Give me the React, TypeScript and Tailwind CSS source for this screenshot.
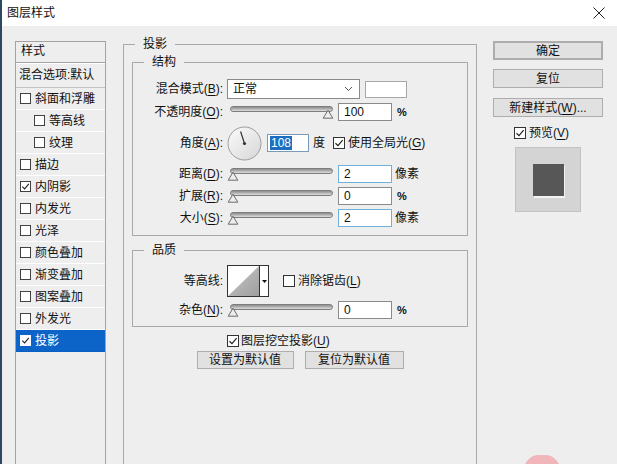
import React from "react";

const font = "font-['Liberation_Sans','Noto_Sans_CJK_SC',sans-serif]";

type CheckProps = { checked?: boolean; size?: number; inverse?: boolean };

const Check: React.FC<CheckProps> = ({ checked, size = 12, inverse }) => (
  <svg width={size} height={size} viewBox="0 0 12 12" className="shrink-0">
    <rect x="0.5" y="0.5" width="11" height="11" fill="#ffffff" stroke={inverse ? "#ffffff" : "#333333"} />
    {checked && <path d="M2.5 6.2 L5 8.6 L9.6 3.2" fill="none" stroke="#222222" strokeWidth="1.2" />}
  </svg>
);

const Key: React.FC<{ k: string }> = ({ k }) => <span className="underline underline-offset-2">{k}</span>;

const Slider: React.FC<{ pos: number }> = ({ pos }) => (
  <div className="relative h-[22px] w-[108px] shrink-0">
    <div className="absolute left-[3px] top-[5px] h-[6px] w-[103px] rounded-full border border-[#7e7e7e] bg-gradient-to-b from-[#8c8c8c] to-[#dedede]" />
    <svg className="absolute top-[8px]" style={{ left: pos }} width="12" height="10" viewBox="0 0 12 10">
      <path d="M1.2 9.2 L6 1.2 L10.8 9.2 Z" fill="#ededed" stroke="#6a6a6a" strokeLinejoin="round" />
    </svg>
  </div>
);

const Field: React.FC<{ value: string; focus?: boolean }> = ({ value, focus }) => (
  <div
    className={`ml-[3px] h-[18px] w-[54px] shrink-0 border bg-white pl-[5px] text-[12px] leading-[16px] ${
      focus ? "border-[#6fb0dc]" : "border-[#8a8a8a]"
    }`}
  >
    {value}
  </div>
);

const Row: React.FC<{ label: React.ReactNode; className: string; children: React.ReactNode }> = ({
  label,
  className,
  children,
}) => (
  <div className={`flex items-center ${className}`}>
    <div className="w-[90px] shrink-0 text-right whitespace-nowrap">{label}</div>
    <div className="ml-[4px] flex items-center">{children}</div>
  </div>
);

const Btn: React.FC<{ children: React.ReactNode; className?: string }> = ({ children, className = "" }) => (
  <div
    className={`flex items-center justify-center border border-[#adadad] bg-[#e1e1e1] text-[12px] leading-[16px] ${className}`}
  >
    {children}
  </div>
);

const styles = [
  { name: "斜面和浮雕", indent: false, checked: false },
  { name: "等高线", indent: true, checked: false },
  { name: "纹理", indent: true, checked: false },
  { name: "描边", indent: false, checked: false },
  { name: "内阴影", indent: false, checked: true },
  { name: "内发光", indent: false, checked: false },
  { name: "光泽", indent: false, checked: false },
  { name: "颜色叠加", indent: false, checked: false },
  { name: "渐变叠加", indent: false, checked: false },
  { name: "图案叠加", indent: false, checked: false },
  { name: "外发光", indent: false, checked: false },
  { name: "投影", indent: false, checked: true, active: true },
];

export default function App() {
  return (
    <div
      className={`relative flex h-[464px] w-[617px] flex-col overflow-hidden border-l-2 border-[#2c4862] bg-[#eeeeee] text-[12px] text-[#111111] ${font}`}
    >
      {/* title bar */}
      <div className="flex h-[26px] shrink-0 items-center justify-between bg-white pl-[5px] pr-[12px]">
        <span className="text-[12px] leading-[16px]">图层样式</span>
        <svg width="12" height="12" viewBox="0 0 12 12">
          <path d="M0.5 0.5 L11.5 11.5 M11.5 0.5 L0.5 11.5" stroke="#222222" strokeWidth="1" />
        </svg>
      </div>

      <div className="flex flex-1">
        {/* left style list */}
        <div className="ml-[13px] mt-[15px] flex h-[440px] w-[91px] shrink-0 flex-col border border-[#a3a3a3] bg-[#eeeeee]">
          <div className="h-[21px] shrink-0 border-b border-[#a3a3a3] pl-[5px] leading-[19px]">样式</div>
          <div className="h-[25px] shrink-0 border-b border-[#c4c4c4] border-t border-t-white pl-[3px] leading-[22px] whitespace-nowrap">
            混合选项:默认
          </div>
          {styles.map((s) => (
            <div
              key={s.name}
              className={`flex h-[22px] shrink-0 items-center gap-[4px] border-b ${
                s.active ? "border-[#0a5fc2] bg-[#0c64c8] text-white" : "border-white"
              } ${s.indent ? "pl-[18px]" : "pl-[4px]"}`}
            >
              <Check checked={s.checked} size={11} inverse={s.active} />
              <span className="leading-[16px]">{s.name}</span>
            </div>
          ))}
        </div>

        {/* main group */}
        <div className="ml-[17px] flex flex-col pt-[10px]">
          <fieldset className="h-[440px] w-[354px] border border-[#a9a9a9]">
            <legend className="ml-[11px] px-[8px] leading-[16px]">投影</legend>

            <fieldset className="mx-[8px] mt-[2px] border border-[#a9a9a9] pb-[6px]">
              <legend className="ml-[11px] px-[8px] leading-[16px]">结构</legend>

              <Row className="mt-[9px] h-[20px]" label={<>混合模式(<Key k="B" />):</>}>
                <div className="flex h-[20px] w-[133px] items-center justify-between border border-[#8a8a8a] bg-white pl-[5px] pr-[6px]">
                  <span className="leading-[16px]">正常</span>
                  <svg width="9" height="6" viewBox="0 0 9 6">
                    <path d="M1 1 L4.5 4.5 L8 1" fill="none" stroke="#555555" strokeWidth="1" />
                  </svg>
                </div>
                <div className="ml-[5px] h-[17px] w-[42px] border border-[#a6a6a6] bg-white" />
              </Row>

              <Row className="mt-[2px] h-[22px]" label={<>不透明度(<Key k="O" />):</>}>
                <Slider pos={95} />
                <Field value="100" />
                <span className="ml-[5px] text-[11px] font-bold">%</span>
              </Row>

              <Row className="mt-[2px] h-[36px]" label={<>角度(<Key k="A" />):</>}>
                <svg width="36" height="35" viewBox="0 0 36 35" className="shrink-0">
                  <defs>
                    <linearGradient id="dial" x1="0" y1="0" x2="1" y2="1">
                      <stop offset="0" stopColor="#fbfbfb" />
                      <stop offset="1" stopColor="#d6d6d6" />
                    </linearGradient>
                  </defs>
                  <circle cx="17.5" cy="17.5" r="16.5" fill="url(#dial)" stroke="#9c9c9c" />
                  <path d="M17.5 17.5 L13.6 5.5" stroke="#333333" strokeWidth="1.2" />
                  <circle cx="17.5" cy="17.5" r="1.6" fill="#333333" />
                </svg>
                <div className="ml-[4px] flex h-[18px] w-[42px] items-center border border-[#7a9bb8] bg-white pl-[2px]">
                  <span className="bg-[#1c6fc0] px-[1px] leading-[14px] text-white">108</span>
                </div>
                <span className="ml-[4px] leading-[16px]">度</span>
                <div className="ml-[8px] flex items-center gap-[3px]">
                  <Check checked />
                  <span className="leading-[16px] whitespace-nowrap">
                    使用全局光(<Key k="G" />)
                  </span>
                </div>
              </Row>

              <Row className="mt-[2px] h-[22px]" label={<>距离(<Key k="D" />):</>}>
                <Slider pos={0} />
                <Field value="2" focus />
                <span className="ml-[3px] leading-[16px]">像素</span>
              </Row>
              <Row className="h-[22px]" label={<>扩展(<Key k="R" />):</>}>
                <Slider pos={0} />
                <Field value="0" />
                <span className="ml-[5px] text-[11px] font-bold">%</span>
              </Row>
              <Row className="h-[22px]" label={<>大小(<Key k="S" />):</>}>
                <Slider pos={0} />
                <Field value="2" focus />
                <span className="ml-[3px] leading-[16px]">像素</span>
              </Row>
            </fieldset>

            <fieldset className="mx-[8px] mt-[6px] border border-[#a9a9a9] pb-[5px]">
              <legend className="ml-[11px] px-[8px] leading-[16px]">品质</legend>

              <Row className="mt-[7px] h-[32px]" label="等高线:">
                <div className="flex h-[32px] w-[42px] border border-[#333333] bg-white">
                  <svg width="31" height="30" viewBox="0 0 31 30" className="shrink-0">
                    <defs>
                      <linearGradient id="ct" x1="0" y1="0" x2="1" y2="1">
                        <stop offset="0" stopColor="#c9c9c9" />
                        <stop offset="1" stopColor="#9e9e9e" />
                      </linearGradient>
                    </defs>
                    <path d="M0 30 L31 0 L31 30 Z" fill="url(#ct)" />
                  </svg>
                  <div className="flex flex-1 items-center justify-center border-l border-[#333333]">
                    <svg width="5" height="3" viewBox="0 0 5 3">
                      <path d="M0 0 L5 0 L2.5 3 Z" fill="#111111" />
                    </svg>
                  </div>
                </div>
                <div className="ml-[14px] flex items-center gap-[3px]">
                  <Check />
                  <span className="leading-[16px] whitespace-nowrap">
                    消除锯齿(<Key k="L" />)
                  </span>
                </div>
              </Row>

              <Row className="mt-[2px] h-[22px]" label={<>杂色(<Key k="N" />):</>}>
                <Slider pos={0} />
                <Field value="0" />
                <span className="ml-[5px] text-[11px] font-bold">%</span>
              </Row>
            </fieldset>

            <div className="mt-[6px] flex h-[16px] items-center gap-[2px] pl-[103px]">
              <Check checked />
              <span className="leading-[16px]">
                图层挖空投影(<Key k="U" />)
              </span>
            </div>

            <div className="mt-[2px] flex justify-center gap-[11px]">
              <Btn className="h-[18px] w-[97px]">设置为默认值</Btn>
              <Btn className="h-[18px] w-[99px]">复位为默认值</Btn>
            </div>
          </fieldset>
        </div>

        {/* right column */}
        <div className="ml-[16px] flex w-[110px] flex-col pt-[15px]">
          <Btn className="h-[19px] border-2 border-[#3a77a8]">确定</Btn>
          <Btn className="mt-[9px] h-[19px]">复位</Btn>
          <Btn className="mt-[10px] h-[19px] whitespace-nowrap">
            新建样式(<Key k="W" />)...
          </Btn>
          <div className="ml-[21px] mt-[8px] flex h-[16px] items-center gap-[3px]">
            <Check checked />
            <span className="leading-[16px]">
              预览(<Key k="V" />)
            </span>
          </div>
          <div className="ml-[22px] mt-[6px] flex h-[65px] w-[66px] items-center justify-center border border-[#c2c2c2] bg-[#d4d4d4]">
            <div className="h-[32px] w-[31px] bg-[#575757] shadow-[1px_2px_0_#f2f2f2]" />
          </div>
        </div>
      </div>

      {/* watermark blob */}
      <div className="absolute left-[522px] top-[455px] h-[30px] w-[36px] rounded-full bg-[#f0a8ac] opacity-80" />
    </div>
  );
}
